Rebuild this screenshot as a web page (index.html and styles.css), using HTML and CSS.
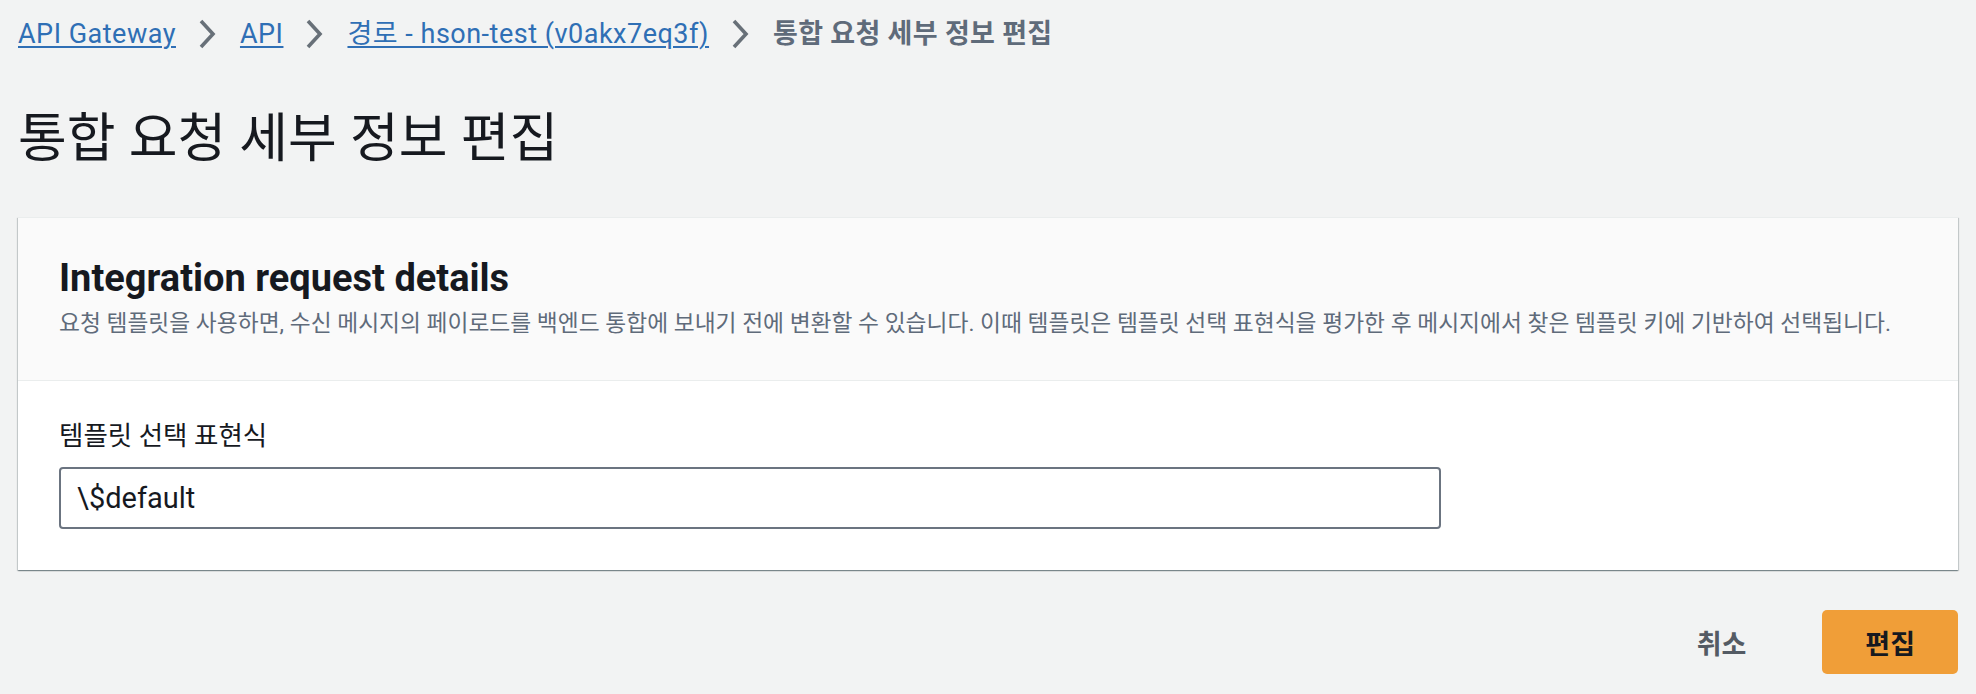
FILE: index.html
```html
<!DOCTYPE html>
<html lang="ko">
<head>
<meta charset="utf-8">
<title>통합 요청 세부 정보 편집</title>
<link rel="stylesheet" href="styles.css">
</head>
<body>
<nav class="breadcrumbs">
  <a class="crumb-link" href="#">API Gateway</a>
  <svg class="chevron" viewBox="0 0 18 30" aria-hidden="true"><path d="M3 2 L15 15 L3 28" /></svg>
  <a class="crumb-link" href="#">API</a>
  <svg class="chevron" viewBox="0 0 18 30" aria-hidden="true"><path d="M3 2 L15 15 L3 28" /></svg>
  <a class="crumb-link" href="#">경로 - hson-test (v0akx7eq3f)</a>
  <svg class="chevron" viewBox="0 0 18 30" aria-hidden="true"><path d="M3 2 L15 15 L3 28" /></svg>
  <span class="crumb-current">통합 요청 세부 정보 편집</span>
</nav>

<h1 class="page-title">통합 요청 세부 정보 편집</h1>

<section class="card">
  <header class="card-header">
    <h2 class="card-title">Integration request details</h2>
    <p class="card-desc">요청 템플릿을 사용하면, 수신 메시지의 페이로드를 백엔드 통합에 보내기 전에 변환할 수 있습니다. 이때 템플릿은 템플릿 선택 표현식을 평가한 후 메시지에서 찾은 템플릿 키에 기반하여 선택됩니다.</p>
  </header>
  <div class="card-body">
    <label class="field-label" for="tse">템플릿 선택 표현식</label>
    <input class="field-input" id="tse" type="text" value="\$default">
  </div>
</section>

<div class="actions">
  <button class="btn btn-cancel" type="button">취소</button>
  <button class="btn btn-primary" type="button">편집</button>
</div>
</body>
</html>
```

FILE: styles.css
```css
* { box-sizing: border-box; }

html, body { margin: 0; }

body {
  background: #f2f3f3;
  padding: 0 18px;
  font-family: "Roboto", "Noto Sans CJK KR", sans-serif;
  color: #16191f;
}

.breadcrumbs {
  display: flex;
  align-items: center;
  padding-top: 14px;
  height: 54px;
  font-size: 27px;
  line-height: 40px;
}

.crumb-link {
  color: #2f6fb5;
  letter-spacing: 0.5px;
  text-decoration: underline;
  text-underline-offset: 3px;
  text-decoration-thickness: 2px;
}

.chevron {
  width: 18px;
  height: 30px;
  margin: 0 24px 0 22px;
  fill: none;
  stroke: #687078;
  stroke-width: 3.6;
}

.crumb-current {
  color: #5f6b7a;
  font-weight: 700;
  letter-spacing: 0.3px;
}

.page-title {
  margin: 55px 0 0;
  font-size: 53px;
  line-height: 60px;
  font-weight: 400;
  color: #16191f;
}

.card {
  margin-top: 48px;
  background: #ffffff;
  border-top: 1px solid #eaeded;
  box-shadow: 0 1px 1px 0 rgba(0, 28, 36, 0.3), 1px 1px 1px 0 rgba(0, 28, 36, 0.15), -1px 1px 1px 0 rgba(0, 28, 36, 0.15);
}

.card-header {
  background: #fafafa;
  border-bottom: 1px solid #eaeded;
  padding: 38px 41px 41px;
}

.card-title {
  margin: 0;
  font-size: 38px;
  line-height: 44px;
  font-weight: 700;
  color: #16191f;
}

.card-desc {
  margin: 9px 0 0;
  font-size: 22.75px;
  line-height: 30px;
  color: #5f6b7a;
  white-space: nowrap;
}

.card-body {
  padding: 39px 41px 41px;
  display: flex;
  flex-direction: column;
  align-items: flex-start;
}

.field-label {
  font-size: 26.5px;
  line-height: 32px;
  color: #16191f;
}

.field-input {
  margin-top: 15px;
  width: 1382px;
  height: 62px;
  border: 2px solid #6b7480;
  border-radius: 4px;
  padding: 0 16px;
  font-family: "Roboto", "Noto Sans CJK KR", sans-serif;
  font-size: 29px;
  color: #16191f;
  background: #ffffff;
  outline: none;
}

.actions {
  display: flex;
  justify-content: flex-end;
  align-items: center;
  gap: 33px;
  margin-top: 40px;
}

.btn {
  height: 64px;
  padding: 0 43px;
  border: none;
  border-radius: 5px;
  font-family: "Roboto", "Noto Sans CJK KR", sans-serif;
  font-size: 27px;
  font-weight: 700;
  cursor: pointer;
}

.btn-cancel {
  background: transparent;
  color: #545b64;
}

.btn-primary {
  background: #f09e38;
  color: #16191f;
}
```
